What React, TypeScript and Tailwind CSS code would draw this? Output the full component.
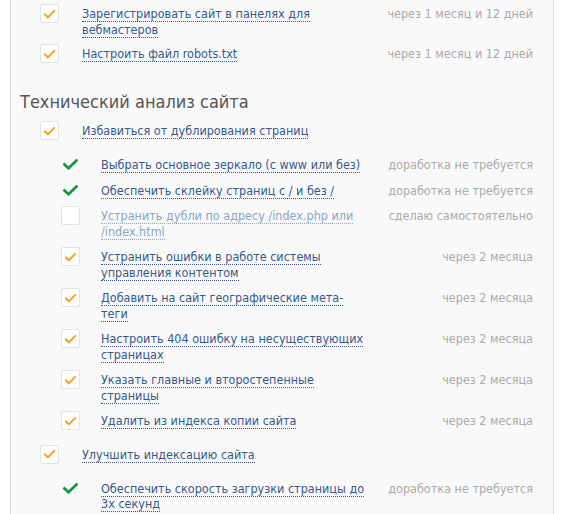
const FONT = "font-['DejaVu_Sans_Condensed','Liberation_Sans',Arial,sans-serif]";

type Mark = "orange" | "green" | "empty";

interface Item {
  text: string;
  when: string;
  mark: Mark;
  muted?: boolean;
}

function CheckBox({ mark }: { mark: Mark }) {
  if (mark === "green") {
    return (
      <div className="w-[19px] h-[19px] shrink-0 mt-[-2px] mb-[-4px] flex items-center justify-center">
        <svg width="15" height="11" viewBox="0 0 15 11">
          <path d="M1.5 5.5 L5.5 9.2 L13.5 1.5" fill="none" stroke="#1b9440" strokeWidth="2.8" strokeLinecap="square" />
        </svg>
      </div>
    );
  }
  return (
    <div className="w-[19px] h-[19px] shrink-0 mt-[-2px] mb-[-4px] rounded-[2px] border border-[#e3e3e3] bg-white flex items-center justify-center">
      {mark === "orange" && (
        <svg width="13" height="10" viewBox="0 0 13 10">
          <path d="M1.2 4.8 L4.8 8.3 L11.8 1.3" fill="none" stroke="#f6a11d" strokeWidth="1.9" />
        </svg>
      )}
    </div>
  );
}

function Row({ item, sub }: { item: Item; sub?: boolean }) {
  return (
    <div className={sub ? "flex items-start py-[5px] pl-[50px] pr-[20px]" : "flex items-start py-[4px] pl-[29px] pr-[20px]"}>
      <CheckBox mark={item.mark} />
      <div className={sub ? "ml-[21px] w-[265px] leading-[15.5px]" : "ml-[23px] w-[289px] leading-[16px]"}>
        <span
          className={
            item.muted
              ? "text-[#8ea5c4] border-b border-dotted border-[#8ea5c4]"
              : "text-[#36598a] border-b border-dotted border-[#36598a]"
          }
        >
          {item.text}
        </span>
      </div>
      <div className="flex-1 text-right text-[#ababab] leading-[15.5px] whitespace-nowrap">{item.when}</div>
    </div>
  );
}

const TOP: Item[] = [
  { text: "Зарегистрировать сайт в панелях для вебмастеров", when: "через 1 месяц и 12 дней", mark: "orange" },
  { text: "Настроить файл robots.txt", when: "через 1 месяц и 12 дней", mark: "orange" },
];

const DUPES: Item[] = [
  { text: "Выбрать основное зеркало (с www или без)", when: "доработка не требуется", mark: "green" },
  { text: "Обеспечить склейку страниц с / и без /", when: "доработка не требуется", mark: "green" },
  { text: "Устранить дубли по адресу /index.php или /index.html", when: "сделаю самостоятельно", mark: "empty", muted: true },
  { text: "Устранить ошибки в работе системы управления контентом", when: "через 2 месяца", mark: "orange" },
  { text: "Добавить на сайт географические мета-\u200bтеги", when: "через 2 месяца", mark: "orange" },
  { text: "Настроить 404 ошибку на несуществующих страницах", when: "через 2 месяца", mark: "orange" },
  { text: "Указать главные и второстепенные страницы", when: "через 2 месяца", mark: "orange" },
  { text: "Удалить из индекса копии сайта", when: "через 2 месяца", mark: "orange" },
];

const INDEXING: Item[] = [
  { text: "Обеспечить скорость загрузки страницы до 3х секунд", when: "доработка не требуется", mark: "green" },
];

export default function App() {
  return (
    <div className={`${FONT} text-[12.5px] bg-white h-[514px] overflow-hidden`}>
      <div className="ml-[10px] w-[544px] h-full border-x border-[#dadada] bg-[#f9f9f9] pt-[2px]">
        {TOP.map((it) => (
          <Row key={it.text} item={it} />
        ))}

        <h2 className="mt-[24px] pl-[9px] text-[18px] leading-[24px] text-[#555555]">Технический анализ сайта</h2>

        <div className="mt-[5px]">
          <Row item={{ text: "Избавиться от дублирования страниц", when: "", mark: "orange" }} />
          <div className="mt-[9px]">
            {DUPES.map((it) => (
              <Row key={it.text} item={it} sub />
            ))}
          </div>
        </div>

        <div className="mt-[9px]">
          <Row item={{ text: "Улучшить индексацию сайта", when: "", mark: "orange" }} />
          <div className="mt-[9px]">
            {INDEXING.map((it) => (
              <Row key={it.text} item={it} sub />
            ))}
          </div>
        </div>
      </div>
    </div>
  );
}
